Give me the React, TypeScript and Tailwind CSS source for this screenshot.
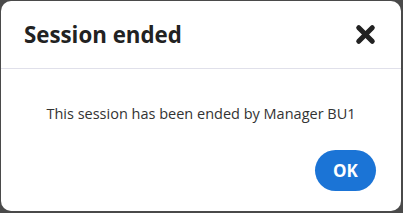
import { X } from "lucide-react";

export default function App() {
  return (
    <div className="w-[403px] h-[213px] bg-[#4a4a4a] pl-px pt-px pr-[2px] pb-[2px] font-['Open_Sans',sans-serif]">
      <div className="h-full bg-white rounded-[10px] flex flex-col">
        <div className="h-[68px] flex items-center justify-between pl-[23px] pr-[22px] border-b border-[#e0e0ea]">
          <h2 className="text-[22.3px] font-bold text-[#222]">Session ended</h2>
          <X className="w-[27px] h-[27px] text-[#222]" strokeWidth={4.5} />
        </div>
        <p className="text-center text-[14.5px] text-[#333] pt-[34px]">
          This session has been ended by Manager BU1
        </p>
        <div className="flex justify-end pr-[25px] pt-[25px]">
          <button className="w-[61px] h-[41px] rounded-full bg-[#1b74d6] text-white font-bold text-[17px]">
            OK
          </button>
        </div>
      </div>
    </div>
  );
}
